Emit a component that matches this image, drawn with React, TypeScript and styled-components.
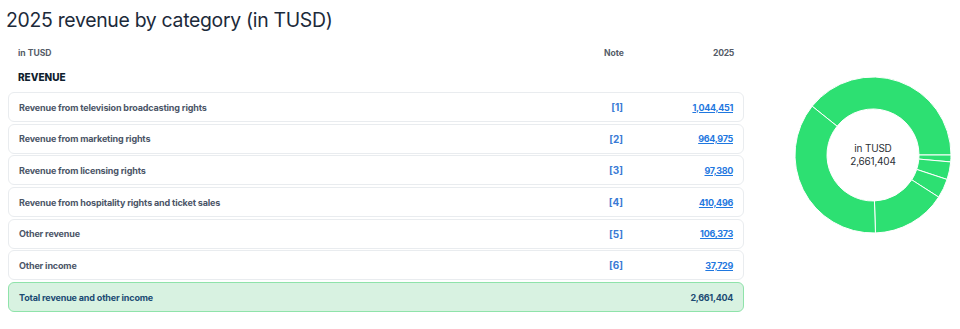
import styled, { createGlobalStyle } from 'styled-components'

const GlobalStyle = createGlobalStyle`
  body {
    margin: 0;
    background: #ffffff;
    font-family: Inter, 'Noto Sans', Arial, sans-serif;
  }
`

type Item = { label: string; note: string; value: number }

const items: Item[] = [
  { label: 'Revenue from television broadcasting rights', note: '[1]', value: 1044451 },
  { label: 'Revenue from marketing rights', note: '[2]', value: 964975 },
  { label: 'Revenue from licensing rights', note: '[3]', value: 97380 },
  { label: 'Revenue from hospitality rights and ticket sales', note: '[4]', value: 410496 },
  { label: 'Other revenue', note: '[5]', value: 106373 },
  { label: 'Other income', note: '[6]', value: 37729 },
]

const total = items.reduce((s, i) => s + i.value, 0)
const fmt = (n: number) => n.toLocaleString('en-US')

// clockwise order used by the chart, starting so TV ends at 3 o'clock
const chartOrder = [0, 5, 2, 4, 3, 1]

function sector(cx: number, cy: number, r0: number, r1: number, a0: number, a1: number) {
  const p = (r: number, a: number) => {
    const rad = ((a - 90) * Math.PI) / 180
    return `${cx + r * Math.cos(rad)} ${cy + r * Math.sin(rad)}`
  }
  const large = a1 - a0 > 180 ? 1 : 0
  return `M ${p(r1, a0)} A ${r1} ${r1} 0 ${large} 1 ${p(r1, a1)} L ${p(r0, a1)} A ${r0} ${r0} 0 ${large} 0 ${p(r0, a0)} Z`
}

function Donut() {
  let angle = 90 - (items[0].value / total) * 360
  const paths = chartOrder.map((idx) => {
    const sweep = (items[idx].value / total) * 360
    const d = sector(80, 80, 46, 78, angle, angle + sweep)
    angle += sweep
    return <path key={idx} d={d} fill='#2de072' stroke='#ffffff' strokeWidth={1} />
  })
  return (
    <DonutWrap>
      <svg width='160' height='160' viewBox='0 0 160 160'>
        {paths}
      </svg>
      <DonutCenter>
        <span>in TUSD</span>
        <span>{fmt(total)}</span>
      </DonutCenter>
    </DonutWrap>
  )
}

export default function App() {
  return (
    <>
      <GlobalStyle />
      <Title>2025 revenue by category (in TUSD)</Title>
      <Content>
        <Table>
          <HeaderRow>
            <Cell>in TUSD</Cell>
            <NoteCell>Note</NoteCell>
            <ValueCell>2025</ValueCell>
          </HeaderRow>
          <SectionLabel>REVENUE</SectionLabel>
          <Rows>
            {items.map((it) => (
              <Row key={it.note}>
                <Cell>{it.label}</Cell>
                <NoteCell $blue>{it.note}</NoteCell>
                <ValueCell>
                  <ValueLink href='#'>{fmt(it.value)}</ValueLink>
                </ValueCell>
              </Row>
            ))}
            <Row $total>
              <Cell>Total revenue and other income</Cell>
              <NoteCell />
              <ValueCell>{fmt(total)}</ValueCell>
            </Row>
          </Rows>
        </Table>
        <Donut />
      </Content>
    </>
  )
}

const Title = styled.h2`
  margin: 6px 0 0 6px;
  font-size: 19.4px;
  line-height: 28px;
  font-weight: 400;
  color: #1c2a3a;
  letter-spacing: -0.3px;
`

const Content = styled.div`
  display: flex;
  align-items: flex-start;
  margin-top: 10px;
`

const Table = styled.div`
  width: 736px;
  margin-left: 8px;
`

const HeaderRow = styled.div`
  display: grid;
  grid-template-columns: 1fr 120px 110px;
  height: 18px;
  align-items: center;
  padding: 0 10px;
  font-size: 8.6px;
  font-weight: 700;
  color: #555c68;
`

const SectionLabel = styled.div`
  margin-top: 6px;
  height: 18px;
  line-height: 18px;
  padding: 0 10px;
  font-size: 10px;
  font-weight: 800;
  color: #0f1e2e;
`

const Rows = styled.div`
  margin-top: 6px;
  display: flex;
  flex-direction: column;
  gap: 1.7px;
`

const Row = styled.div<{ $total?: boolean }>`
  display: grid;
  grid-template-columns: 1fr 120px 110px;
  align-items: center;
  box-sizing: border-box;
  height: 30px;
  padding: 0 10px;
  border-radius: 6px;
  border: 1px solid ${(p) => (p.$total ? '#8fe3aa' : '#e9ecef')};
  background: ${(p) => (p.$total ? '#d8f2e1' : '#ffffff')};
  font-size: 9px;
  font-weight: 700;
  letter-spacing: -0.15px;
  color: ${(p) => (p.$total ? '#1b4b73' : '#4b5567')};
`

const Cell = styled.div`
  white-space: nowrap;
`

const NoteCell = styled.div<{ $blue?: boolean }>`
  text-align: right;
  color: ${(p) => (p.$blue ? '#3a7bd5' : 'inherit')};
  font-size: ${(p) => (p.$blue ? '10px' : 'inherit')};
  letter-spacing: 0;
`

const ValueCell = styled.div`
  text-align: right;
  letter-spacing: -0.3px;
`

const ValueLink = styled.a`
  color: #1f78e0;
  text-decoration: underline;
  text-underline-offset: 1px;
`

const DonutWrap = styled.div`
  position: relative;
  width: 160px;
  height: 160px;
  margin: 31px 0 0 49px;
`

const DonutCenter = styled.div`
  position: absolute;
  inset: 0;
  display: flex;
  flex-direction: column;
  align-items: center;
  justify-content: center;
  font-size: 10px;
  line-height: 13px;
  letter-spacing: -0.2px;
  color: #2b2f36;
`
